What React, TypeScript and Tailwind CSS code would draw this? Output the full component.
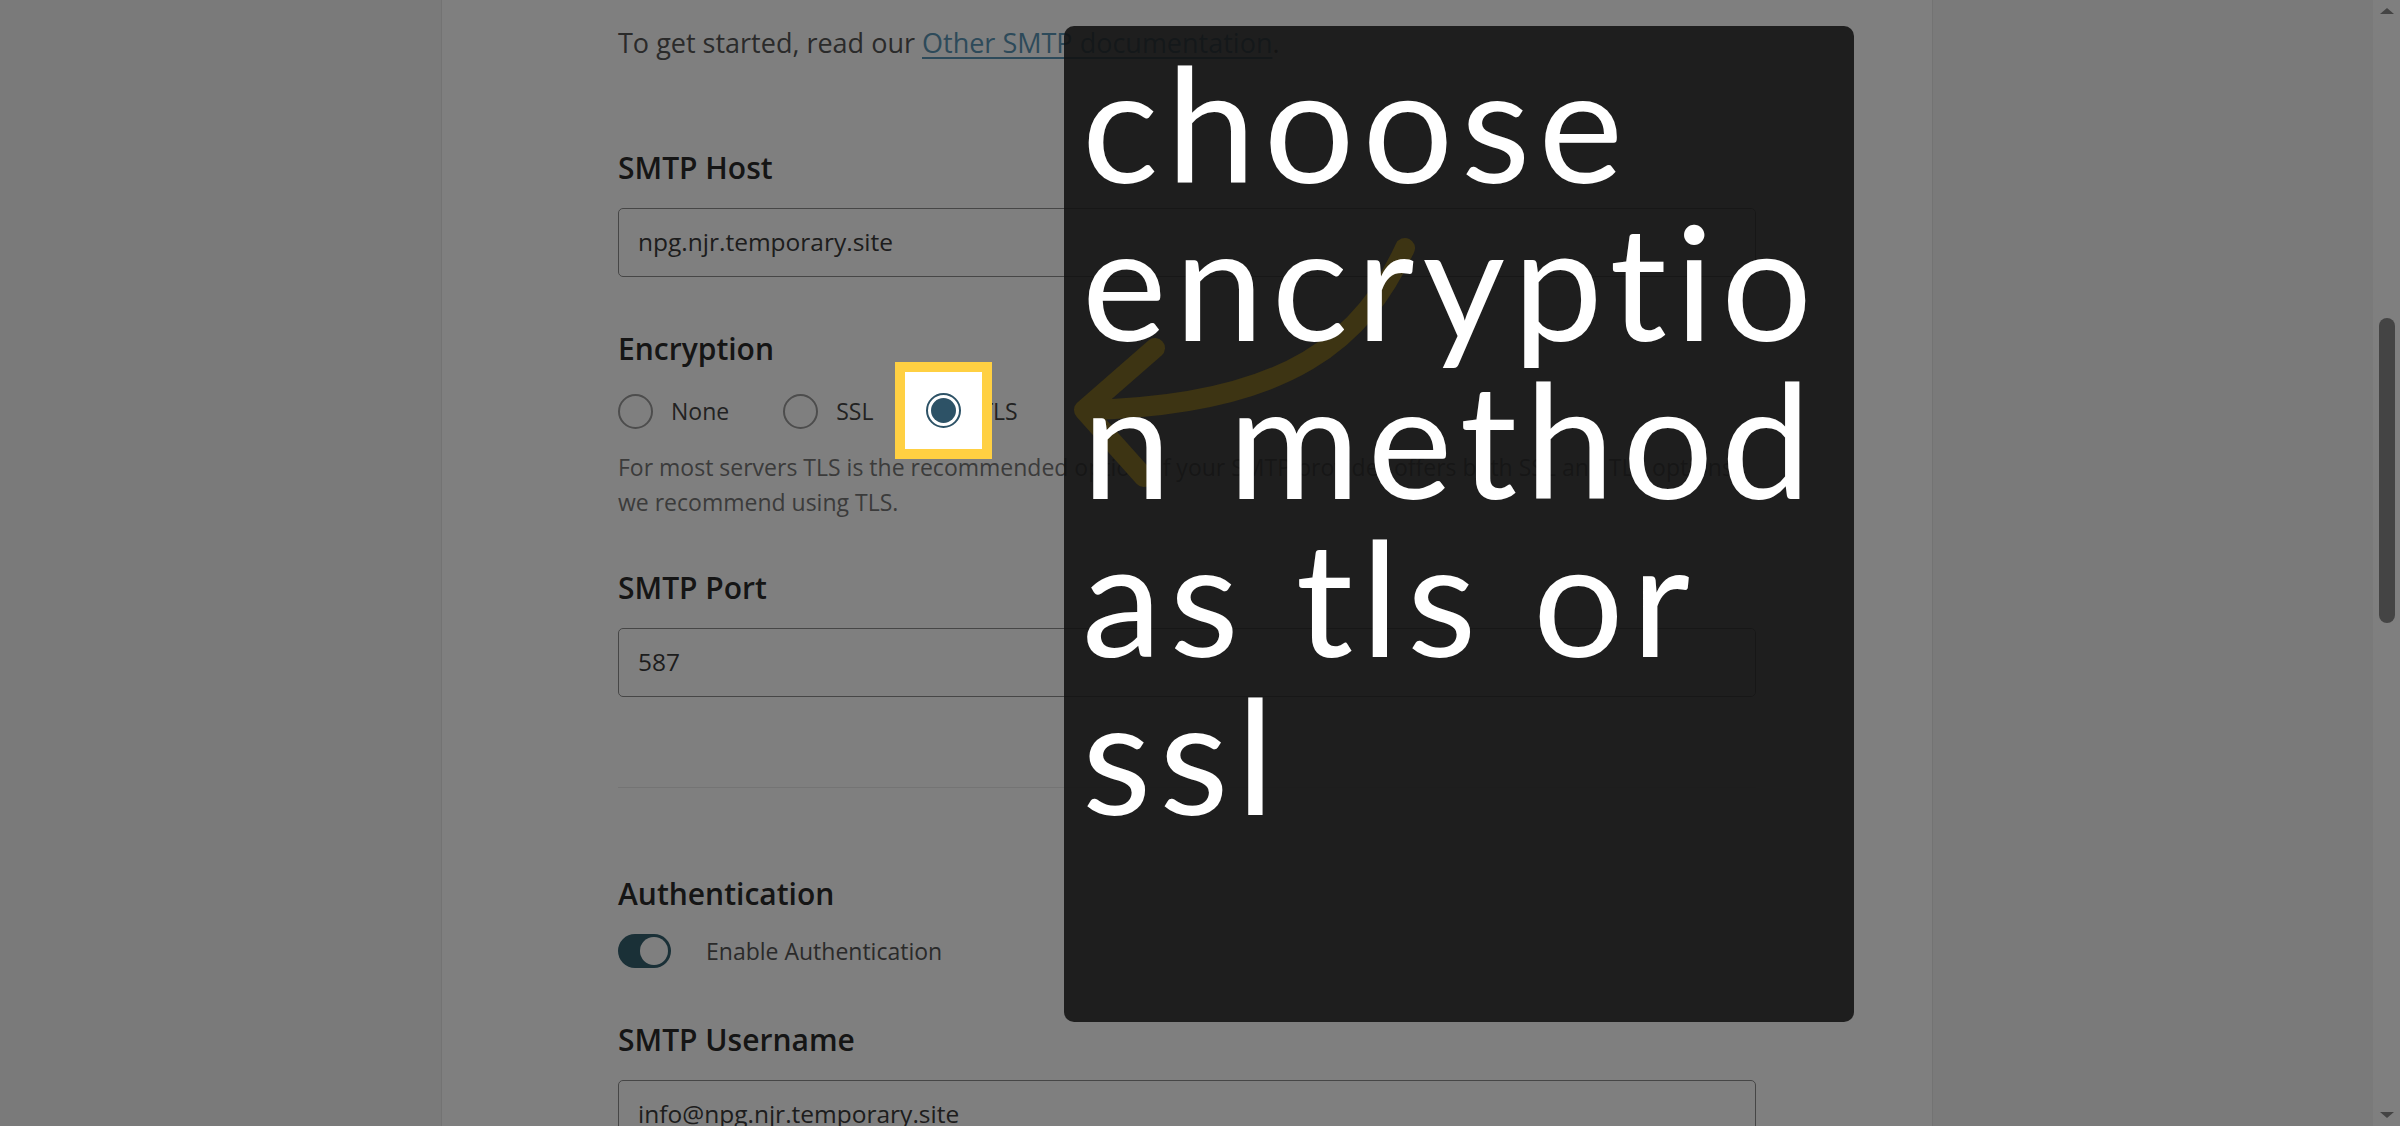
import React from 'react';

const Label: React.FC<{ children: React.ReactNode; className?: string }> = ({ children, className = '' }) => (
    <div className={`text-[30px] leading-[40px] font-semibold text-[#2b2b2b] ${className}`}>{children}</div>
);

const Field: React.FC<{ value: string; className?: string }> = ({ value, className = '' }) => (
    <div className={`h-[69px] w-full rounded-[5px] border border-[#8c8c8c] flex items-center pl-[19px] text-[24.5px] text-[#3a3a3a] ${className}`}>
        {value}
    </div>
);

const Radio: React.FC<{ label: string; checked?: boolean }> = ({ label, checked }) => (
    <div className="flex items-center">
        <div
            className={`h-[35px] w-[35px] rounded-full border-2 flex items-center justify-center ${
                checked ? 'border-[#2d5266]' : 'border-[#9a9a9a]'
            }`}
        >
            {checked && <div className="h-[25px] w-[25px] rounded-full bg-[#2d5266]" />}
        </div>
        <span className="ml-[18px] text-[23px] text-[#444]">{label}</span>
    </div>
);

export default function App() {
    const lines = ['choose', 'encryptio', 'n method', 'as tls or', 'ssl'];

    return (
        <div
            className="relative h-[1126px] w-[2400px] overflow-hidden bg-[#f4f4f4] flex"
            style={{ fontFamily: '"Open Sans", "Noto Sans", sans-serif' }}
        >
            {/* Page */}
            <div className="flex-1 flex">
                <div className="ml-[441px] w-[1492px] h-full bg-white border-x border-[#e6e6e6] pl-[176px] pr-[176px] pt-[25px]">
                    <p className="text-[27px] leading-[36px] text-[#555]">
                        To get started, read our{' '}
                        <a className="text-[#5a94b4] underline underline-offset-4">Other SMTP documentation</a>.
                    </p>

                    <Label className="mt-[87px]">SMTP Host</Label>
                    <Field className="mt-[20px]" value="npg.njr.temporary.site" />

                    <Label className="mt-[52px]">Encryption</Label>
                    <div className="mt-[25px] flex items-center gap-[54px]">
                        <Radio label="None" />
                        <Radio label="SSL" />
                        <Radio label="TLS" checked />
                    </div>
                    <p className="mt-[21px] text-[23px] leading-[35px] text-[#777]">
                        For most servers TLS is the recommended option. If your SMTP provider offers both SSL and TLS options,
                        we recommend using TLS.
                    </p>

                    <Label className="mt-[48px]">SMTP Port</Label>
                    <Field className="mt-[20px]" value="587" />

                    <div className="mt-[90px] h-px bg-[#e8e8e8]" />

                    <Label className="mt-[86px]">Authentication</Label>
                    <div className="mt-[20px] flex items-center">
                        <div className="h-[34px] w-[53px] rounded-full bg-[#34606f] p-[3px] flex justify-end">
                            <div className="h-[28px] w-[28px] rounded-full bg-white" />
                        </div>
                        <span className="ml-[35px] text-[23px] text-[#555]">Enable Authentication</span>
                    </div>

                    <Label className="mt-[51px]">SMTP Username</Label>
                    <Field className="mt-[20px]" value="info@npg.njr.temporary.site" />
                </div>
            </div>

            {/* Scrollbar */}
            <div className="w-[27px] h-full bg-white relative flex flex-col items-center">
                <div className="mt-[8px] w-0 h-0 border-x-[7px] border-x-transparent border-b-[6px] border-b-[#888]" />
                <div className="mt-[304px] w-[16px] h-[305px] rounded-full bg-[#888]" />
                <div className="absolute bottom-[8px] w-0 h-0 border-x-[7px] border-x-transparent border-t-[6px] border-t-[#888]" />
            </div>

            {/* Dim overlay */}
            <div className="absolute inset-0 bg-black/50" />

            {/* Spotlight on the TLS radio */}
            <div className="absolute left-[895px] top-[362px] w-[97px] h-[97px] border-[10px] border-[#ffd042] bg-white flex items-center justify-center">
                <div className="h-[35px] w-[35px] rounded-full border-2 border-[#2d5266] flex items-center justify-center">
                    <div className="h-[25px] w-[25px] rounded-full bg-[#2d5266]" />
                </div>
            </div>

            {/* Hint panel */}
            <div className="absolute left-[1064px] top-[26px] w-[790px] h-[996px] rounded-[10px] bg-[rgba(17,17,17,0.88)] overflow-hidden">
                <svg className="absolute inset-0" width="790" height="996" viewBox="0 0 790 996" fill="none">
                    <path
                        d="M341 222 C300 310 230 380 20 384 M91 322 L20 384 L80 451"
                        stroke="#3d3413"
                        strokeWidth="20"
                        strokeLinecap="round"
                        strokeLinejoin="round"
                    />
                </svg>
                <div
                    className="relative pl-[18px] pt-[16px] text-white text-[160px] leading-[158px] tracking-[8px]"
                    style={{ fontFamily: 'Lato, "Noto Sans", sans-serif' }}
                >
                    {lines.map((line) => (
                        <div key={line} className="whitespace-nowrap">
                            {line}
                        </div>
                    ))}
                </div>
            </div>
        </div>
    );
}
